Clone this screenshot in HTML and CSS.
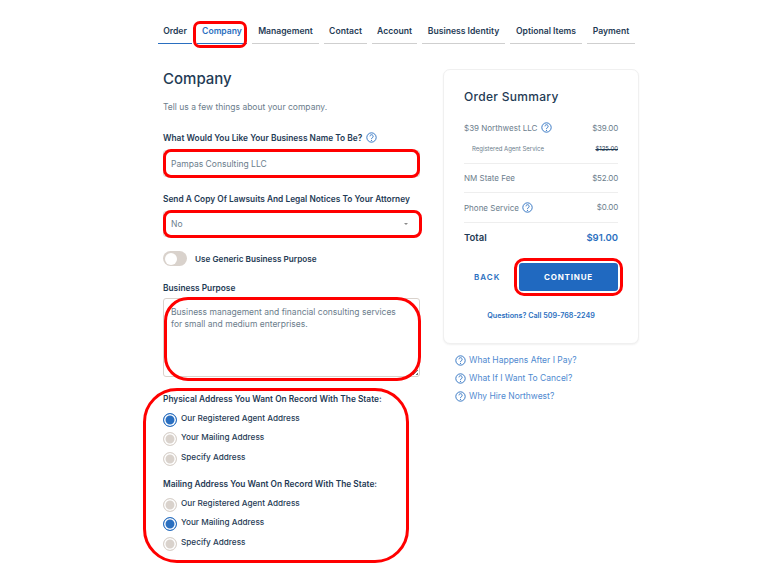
FILE: index.html
```html
<!DOCTYPE html>
<html lang="en">
<head>
<meta charset="utf-8">
<title>Company</title>
<link rel="stylesheet" href="styles.css">
</head>
<body>
<svg class="defs" width="0" height="0" aria-hidden="true">
  <symbol id="q" viewBox="0 0 12 12">
    <circle cx="6" cy="6" r="5.1" fill="none" stroke="currentColor" stroke-width="1"/>
    <path d="M4.3 4.7a1.75 1.75 0 1 1 2.7 1.5c-.7.4-1 .7-1 1.4" fill="none" stroke="currentColor" stroke-width="1"/>
    <circle cx="6" cy="9.1" r=".65" fill="currentColor"/>
  </symbol>
</svg>
<div class="page">
  <nav class="tabs">
    <a class="tab done">Order</a>
    <a class="tab active">Company</a>
    <a class="tab">Management</a>
    <a class="tab">Contact</a>
    <a class="tab">Account</a>
    <a class="tab">Business Identity</a>
    <a class="tab">Optional Items</a>
    <a class="tab">Payment</a>
  </nav>
  <div class="columns">
    <main class="form">
      <h1>Company</h1>
      <p class="intro">Tell us a few things about your company.</p>
      <label class="label label-name">What Would You Like Your Business Name To Be? <svg class="q"><use href="#q"/></svg></label>
      <div class="field">Pampas Consulting LLC</div>
      <label class="label label-attorney">Send A Copy Of Lawsuits And Legal Notices To Your Attorney</label>
      <div class="field select">No<span class="caret"></span></div>
      <div class="toggle-row"><span class="toggle"><span class="knob"></span></span><span class="toggle-label">Use Generic Business Purpose</span></div>
      <label class="label label-purpose">Business Purpose</label>
      <div class="field area">Business management and financial consulting services<br>for small and medium enterprises.<span class="grip"></span></div>
      <fieldset class="group group-first">
        <legend class="label">Physical Address You Want On Record With The State:</legend>
        <div class="radio"><span class="dot on"></span>Our Registered Agent Address</div>
        <div class="radio"><span class="dot"></span>Your Mailing Address</div>
        <div class="radio"><span class="dot"></span>Specify Address</div>
      </fieldset>
      <fieldset class="group">
        <legend class="label">Mailing Address You Want On Record With The State:</legend>
        <div class="radio"><span class="dot"></span>Our Registered Agent Address</div>
        <div class="radio"><span class="dot on"></span>Your Mailing Address</div>
        <div class="radio"><span class="dot"></span>Specify Address</div>
      </fieldset>
    </main>
    <aside class="side">
      <section class="card">
        <h2>Order Summary</h2>
        <div class="line first"><span>$39 Northwest LLC <svg class="q"><use href="#q"/></svg></span><span class="price">$39.00</span></div>
        <div class="line sub"><span>Registered Agent Service</span><s>$125.00</s></div>
        <div class="line"><span>NM State Fee</span><span class="price">$52.00</span></div>
        <div class="line"><span>Phone Service <svg class="q"><use href="#q"/></svg></span><span class="price">$0.00</span></div>
        <div class="line total"><span>Total</span><span class="amount">$91.00</span></div>
        <div class="actions"><a class="back">BACK</a><a class="continue">CONTINUE</a></div>
        <a class="call">Questions? Call 509-768-2249</a>
      </section>
      <ul class="help">
        <li><svg class="q"><use href="#q"/></svg>What Happens After I Pay?</li>
        <li><svg class="q"><use href="#q"/></svg>What If I Want To Cancel?</li>
        <li><svg class="q"><use href="#q"/></svg>Why Hire Northwest?</li>
      </ul>
    </aside>
  </div>
</div>
<div class="mark mark-tab"></div>
<div class="mark mark-name"></div>
<div class="mark mark-select"></div>
<div class="mark mark-area"></div>
<div class="mark mark-radios"></div>
<div class="mark mark-continue"></div>
</body>
</html>
```
FILE: styles.css
```css
* { box-sizing: border-box; }
html, body { margin: 0; height: 576px; overflow: hidden; background: #fff; }
body { position: relative; font-family: Inter, "Open Sans", sans-serif; color: #1f3b55; }
.defs { position: absolute; }
.page { padding: 24px 0 0 158px; }

.tabs { display: grid; width: 477px; grid-template-columns: 34px 50px 67px 43px 45px 83px 72px 48px; column-gap: 5px; }
.tab { height: 20px; text-align: center; font-size: 8.6px; font-weight: 600; line-height: 15px; border-bottom: 1px solid #cfcfcf; color: #1f3b55; white-space: nowrap; }
.tab.done { border-bottom-color: #2a6fc0; }
.tab.active { color: #2a6fc0; border-bottom-color: #2a6fc0; }

.columns { display: flex; padding-left: 5px; padding-top: 25px; }
.form { flex: none; width: 257px; margin-right: 23px; }

h1 { margin: 0; font-size: 15px; font-weight: 500; line-height: 20px; color: #1f3b55; }
.intro { margin: 12px 0 0; font-size: 8.5px; line-height: 12px; color: #6b7d8c; }

.label { display: block; font-size: 8.35px; font-weight: 600; line-height: 12px; color: #1f3b55; padding: 0; white-space: nowrap; }
.label .q { vertical-align: -2px; margin-left: 2px; }
.label-name { margin-top: 19px; }
.label-attorney { margin-top: 16px; }
.label-purpose { margin-top: 16px; }

.field { margin-top: 6px; height: 27px; border: 1px solid #d9d2cc; border-radius: 3px; padding-left: 7px; font-size: 8.5px; line-height: 26px; color: #6b7d8c; background: #fff; }
.select { position: relative; height: 26px; line-height: 24px; }
.caret { position: absolute; right: 11px; top: 11px; border-left: 2px solid transparent; border-right: 2px solid transparent; border-top: 2px solid #8a8a8a; }
.area { position: relative; margin-top: 4px; height: 79px; line-height: 12px; padding-top: 7px; }
.grip { position: absolute; right: 1px; bottom: 1px; width: 5px; height: 5px; background: linear-gradient(135deg, transparent 50%, #777 50%, #777 60%, transparent 60%, transparent 78%, #777 78%); }

.toggle-row { display: flex; align-items: center; margin-top: 14px; height: 15px; }
.toggle { display: block; width: 24px; height: 15px; border-radius: 8px; background: #d9d2cc; padding: 1.5px; }
.knob { display: block; width: 12px; height: 12px; border-radius: 50%; background: #fff; }
.toggle-label { margin-left: 8px; font-size: 8.2px; font-weight: 600; color: #1f3b55; }

.group { border: 0; margin: 0; padding: 0; }
.group .label { padding: 0; }
.group-first { margin-top: 16px; margin-bottom: 11.5px; }
.radio { display: flex; align-items: center; height: 19.5px; font-size: 8.2px; font-weight: 500; color: #1f3b55; white-space: nowrap; }
.radio:first-of-type { margin-top: 3px; }
.dot { flex: none; width: 14px; height: 14px; margin-right: 4px; border: 1px solid #d9d2cc; border-radius: 50%; background: #d9d2cc; box-shadow: inset 0 0 0 1.5px #fff; position: relative; top: 2px; }
.dot.on { border-color: #2a6fc0; background: #2a6fc0; }

.side { flex: none; width: 196px; }
.card { height: 275px; padding: 18px 20px 0 20px; background: #fff; border: 1px solid #f0f0f0; border-radius: 7px; box-shadow: 0 1px 2px rgba(0,0,0,.06); }
h2 { margin: 0; font-size: 12px; letter-spacing: .3px; font-weight: 500; line-height: 18px; color: #1f3b55; }
.line { display: flex; justify-content: space-between; align-items: center; height: 29.5px; border-top: 1px solid #eee; font-size: 8px; color: #6b7d8c; }
.line .q { vertical-align: -2px; margin-left: 1px; }
.price { letter-spacing: -.2px; }
.line.first { border-top: 0; margin-top: 12px; height: 19px; }
.line.sub { border-top: 0; height: 25.5px; padding-left: 8px; padding-bottom: 3px; font-size: 6px; }
.line.sub s { color: #1f3b55; }
.line.total { font-size: 9.5px; font-weight: 600; color: #1f3b55; height: 30px; }
.amount { color: #2a6fc0; }
.actions { display: flex; align-items: center; justify-content: space-between; margin: 11px 0 0 0; padding-left: 10px; }
.back { font-size: 8px; font-weight: 600; letter-spacing: 1px; color: #2a6fc0; }
.continue { display: block; width: 99px; height: 28px; border-radius: 3px; background: #2069c0; color: #fff; text-align: center; font-size: 8px; font-weight: 700; letter-spacing: .8px; line-height: 28px; }
.call { display: block; margin-top: 20px; text-align: center; font-size: 7.2px; font-weight: 600; color: #2a6fc0; }

.help { list-style: none; margin: 7px 0 0; padding: 0 0 0 12px; }
.help li { display: flex; align-items: center; height: 18px; font-size: 8.5px; color: #4f8ad0; white-space: nowrap; }
.q { width: 11px; height: 11px; color: #2a6fc0; }
.help .q { margin-right: 3px; flex: none; }

.mark { position: absolute; border: 3px solid #f00; }
.mark-tab { left: 193px; top: 21px; width: 54px; height: 27px; border-radius: 7px; }
.mark-name { left: 163px; top: 149px; width: 257px; height: 29px; border-radius: 8px; }
.mark-select { left: 163px; top: 210px; width: 259px; height: 28px; border-radius: 8px; }
.mark-area { left: 164px; top: 297px; width: 257px; height: 84px; border-radius: 24px; }
.mark-radios { left: 143px; top: 388px; width: 266px; height: 175px; border-radius: 34px; }
.mark-continue { left: 514px; top: 258px; width: 109px; height: 38px; border-radius: 10px; }
```
